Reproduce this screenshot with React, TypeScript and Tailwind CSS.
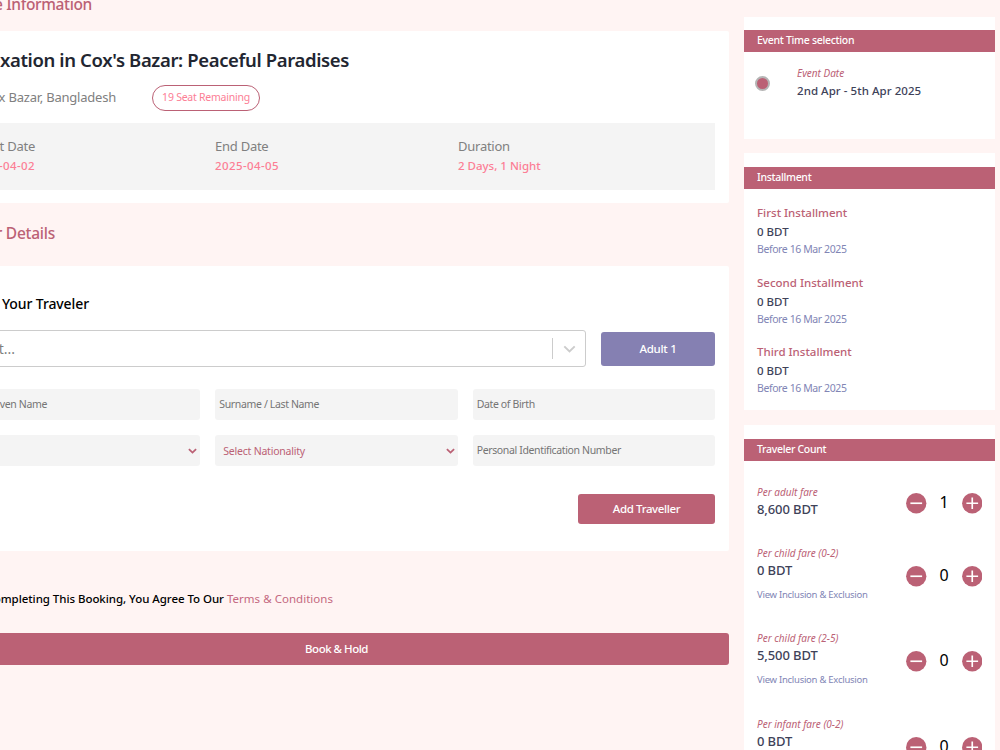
import { useState } from "react";

const dates = [
  { label: "Start Date", value: "2025-04-02", tracking: "tracking-[0.4px]" },
  { label: "End Date", value: "2025-04-05", tracking: "tracking-[0.4px]" },
  { label: "Duration", value: "2 Days, 1 Night", tracking: "tracking-normal" },
];

const installments = ["First Installment", "Second Installment", "Third Installment"];

const fares = [
  { label: "Per adult fare", price: "8,600 BDT", count: 1, details: false },
  { label: "Per child fare (0-2)", price: "0 BDT", count: 0, details: true },
  { label: "Per child fare (2-5)", price: "5,500 BDT", count: 0, details: true },
  { label: "Per infant fare (0-2)", price: "0 BDT", count: 0, details: true },
];

function Chevron({ className }: { className: string }) {
  return (
    <svg viewBox="0 0 10 6" fill="none" stroke="currentColor" className={className}>
      <path d="M1 1l4 3.8L9 1" />
    </svg>
  );
}

function RoundButton({ plus, onClick }: { plus?: boolean; onClick: () => void }) {
  return (
    <button onClick={onClick} aria-label={plus ? "Increase" : "Decrease"} className="size-[20.5px]">
      <svg viewBox="0 0 21 21" className="size-full">
        <circle cx="10.5" cy="10.5" r="10.4" fill="#bb6175" />
        <path d={plus ? "M4.5 10.5h12M10.5 4.5v12" : "M4.5 10.5h12"} stroke="#fff" strokeWidth="1.7" />
      </svg>
    </button>
  );
}

function CardHeader({ children }: { children: string }) {
  return (
    <h3 className="h-[22px] bg-[#bb6175] pl-[13px] text-[10.5px] leading-[20px] font-medium tracking-[-0.3px] text-white">
      {children}
    </h3>
  );
}

export default function App() {
  const [counts, setCounts] = useState(fares.map((fare) => fare.count));

  const changeCount = (index: number, step: number) => {
    setCounts(counts.map((c, i) => (i === index ? Math.max(0, c + step) : c)));
  };

  return (
    <div className="flex h-[750px] w-[1000px] overflow-hidden bg-[#fff4f3] font-['Noto_Sans',sans-serif] whitespace-nowrap">
      {/* Booking form */}
      <main className="-ml-[56px] w-[785px] shrink-0">
        <h2 className="flex h-[31px] w-[148px] justify-end text-[15.5px] leading-[8px] font-medium tracking-[-0.35px] text-[#bb6175]">
          Package Information
        </h2>

        <section className="h-[172px] rounded-[2px] bg-white px-[14px] pt-[14px]">
          <h1 className="flex h-[30px] w-[391px] justify-end text-[18.5px] leading-[30px] font-semibold tracking-[-0.37px] text-[#222631]">
            Relaxation in Cox's Bazar: Peaceful Paradises
          </h1>
          <div className="mt-[10px] flex h-[26px]">
            <p className="flex w-[158px] justify-end text-[13px] leading-[24px] tracking-[-0.22px] text-[#808080]">
              Cox Bazar, Bangladesh
            </p>
            <span className="ml-[36px] h-[26px] w-[108px] rounded-full border border-[#bb6175] text-center text-[10.5px] leading-[23px] tracking-[-0.24px] text-[#fc7e95]">
              19 Seat Remaining
            </span>
          </div>
          <div className="mt-[12px] grid h-[67px] grid-cols-3 bg-[#f4f4f4] px-[14px] pt-[13px]">
            {dates.map((item) => (
              <div key={item.label} className={item.label === "Start Date" ? "flex w-[63px] flex-col items-end" : ""}>
                <p className="text-[13px] leading-[20px] tracking-[-0.25px] text-[#808080]">{item.label}</p>
                <p className={`text-[11.5px] leading-[20px] font-medium text-[#fc7e95] ${item.tracking}`}>
                  {item.value}
                </p>
              </div>
            ))}
          </div>
        </section>

        <h2 className="flex h-[63px] w-[111px] justify-end text-[15.5px] leading-[60px] font-medium tracking-[-0.25px] text-[#bb6175]">
          Traveler Details
        </h2>

        <section className="h-[285px] rounded-[2px] bg-white px-[14px] pt-[26px]">
          <h3 className="flex h-[24px] w-[131px] justify-end text-[14px] leading-[24px] font-medium tracking-[-0.1px] text-black">
            Select Your Traveler
          </h3>
          <div className="mt-[14px] flex items-center gap-[15px]">
            <div className="flex h-[37px] w-[628px] items-center rounded-[3px] border border-[#ccc]">
              <span className="flex w-[56px] justify-end text-[14px] text-[#808080]">Select...</span>
              <span className="ml-auto h-[21px] w-px bg-[#ccc]" />
              <Chevron className="mr-[9px] ml-[10px] h-[8px] w-[13px] stroke-[1.5] text-[#ccc]" />
            </div>
            <button className="h-[34px] w-[114px] rounded-[3px] bg-[#8580b2] text-[11.5px] font-medium tracking-[-0.25px] text-white">
              Adult 1
            </button>
          </div>

          <div className="mt-[22px] grid grid-cols-3 gap-[15px] text-[10.5px] leading-[30px] tracking-[-0.36px] text-[#757575]">
            <div className="h-[31px] rounded-[3px] bg-[#f4f4f4]">
              <span className="flex w-[89px] justify-end">Given Name</span>
            </div>
            <div className="h-[31px] rounded-[3px] bg-[#f4f4f4] pl-[4px]">Surname / Last Name</div>
            <div className="h-[31px] rounded-[3px] bg-[#f4f4f4] pl-[4px]">Date of Birth</div>
            <div className="flex h-[31px] items-center justify-end rounded-[3px] bg-[#f4f4f4] pr-[3px] text-[#bb6175]">
              <Chevron className="h-[6px] w-[9px] stroke-[2]" />
            </div>
            <div className="flex h-[31px] items-center justify-between rounded-[3px] bg-[#f4f4f4] pr-[3px] pl-[8px] tracking-[-0.22px] text-[#bb6175]">
              Select Nationality
              <Chevron className="h-[6px] w-[9px] stroke-[2]" />
            </div>
            <div className="h-[31px] rounded-[3px] bg-[#f4f4f4] pl-[4px]">Personal Identification Number</div>
          </div>

          <div className="mt-[28px] flex justify-end">
            <button className="h-[30px] w-[137px] rounded-[3px] bg-[#bb6175] text-[11.5px] font-medium tracking-[-0.38px] text-white">
              Add Traveller
            </button>
          </div>
        </section>

        <p className="mt-[36px] flex h-[24px] w-[389px] justify-end gap-[3px] text-[11.5px] leading-[24px] font-medium tracking-[-0.05px] text-black">
          By Completing This Booking, You Agree To Our
          <a className="font-normal tracking-[0.03px] text-[#c4687f]">Terms &amp; Conditions</a>
        </p>

        <button className="mt-[22px] h-[32px] w-full rounded-[3px] bg-[#bb6175] pb-px text-[11.5px] font-medium tracking-[-0.5px] text-white">
          Book &amp; Hold
        </button>
      </main>

      {/* Sidebar */}
      <aside className="ml-[15px] w-[251px] shrink-0 pt-[17px]">
        <section className="h-[122px] bg-white pt-[13px]">
          <CardHeader>Event Time selection</CardHeader>
          <div className="flex pl-[11px]">
            <span className="mt-[24px] size-[15px] rounded-full border-2 border-[#b5b5b5] bg-[#bb6175]" />
            <div className="ml-[27px] pt-[13px]">
              <p className="text-[10px] leading-[17px] text-[#bb6175] italic">Event Date</p>
              <p className="text-[11.5px] leading-[17px] font-medium tracking-[0.05px] text-[#3e4259]">
                2nd Apr - 5th Apr 2025
              </p>
            </div>
          </div>
        </section>

        <section className="mt-[14px] h-[257px] bg-white pt-[14px]">
          <CardHeader>Installment</CardHeader>
          <div className="pt-[15px] pl-[13px]">
            {installments.map((name) => (
              <div key={name} className="h-[69.5px]">
                <p className="text-[11.5px] leading-[18px] font-medium text-[#bb6175]">{name}</p>
                <p className="text-[11.5px] leading-[19px] font-medium text-[#3e4259]">0 BDT</p>
                <p className="text-[10.5px] leading-[16px] tracking-[-0.4px] text-[#8185b5]">Before 16 Mar 2025</p>
              </div>
            ))}
          </div>
        </section>

        <section className="mt-[15px] h-[440px] bg-white pt-[14px]">
          <CardHeader>Traveler Count</CardHeader>
          <div className="pt-[23px] pr-[13px] pl-[13px]">
            {fares.map((fare, i) => (
              <div key={fare.label} className={`flex justify-between ${fare.details ? "h-[85.4px]" : "h-[61px]"}`}>
                <div>
                  <p className="text-[10px] leading-[16px] text-[#bb6175] italic">{fare.label}</p>
                  <p className="text-[13px] leading-[18px] font-medium tracking-[-0.1px] text-[#3e4259]">
                    {fare.price}
                  </p>
                  {fare.details && (
                    <a className="mt-[7px] block text-[9.5px] leading-[18px] tracking-[-0.26px] text-[#8185b5]">
                      View Inclusion &amp; Exclusion
                    </a>
                  )}
                </div>
                <div className={`flex items-start ${fare.details ? "pt-[21px]" : "pt-[9px]"}`}>
                  <RoundButton onClick={() => changeCount(i, -1)} />
                  <span className="w-[35px] text-center text-[16px] leading-[19px] text-black">{counts[i]}</span>
                  <RoundButton plus onClick={() => changeCount(i, 1)} />
                </div>
              </div>
            ))}
          </div>
        </section>
      </aside>
    </div>
  );
}
